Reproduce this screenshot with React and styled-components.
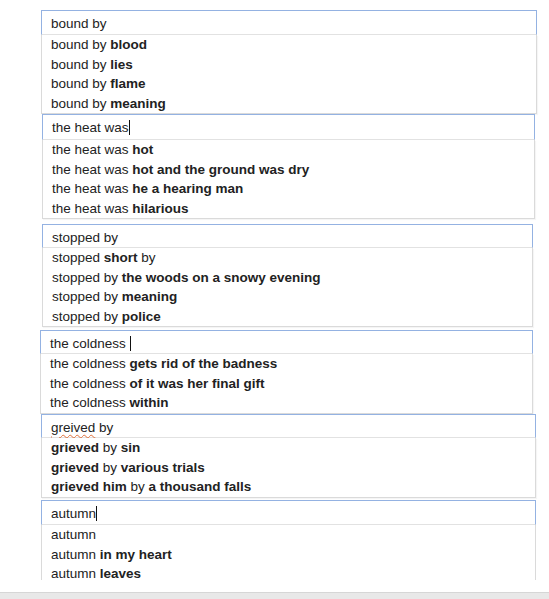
import React from "react";
import styled, { createGlobalStyle } from "styled-components";

const GlobalStyle = createGlobalStyle`
  html, body {
    margin: 0;
    padding: 0;
    background: #ffffff;
  }
  body {
    font-family: "Liberation Sans", Arial, sans-serif;
    color: #222222;
  }
`;

const blocks = [
  {
    query: "bound by",
    left: 41,
    width: 496,
    gap: 10,
    field: 25,
    rows: ["bound by **blood**", "bound by **lies**", "bound by **flame**", "bound by **meaning**"],
  },
  {
    query: "the heat was",
    caret: true,
    left: 42,
    width: 493,
    gap: 0,
    field: 26,
    rows: [
      "the heat was **hot**",
      "the heat was **hot and the ground was dry**",
      "the heat was **he a hearing man**",
      "the heat was **hilarious**",
    ],
  },
  {
    query: "stopped by",
    left: 42,
    width: 491,
    gap: 5,
    field: 24,
    rows: [
      "stopped **short** by",
      "stopped by **the woods on a snowy evening**",
      "stopped by **meaning**",
      "stopped by **police**",
    ],
  },
  {
    query: "the coldness ",
    caret: true,
    left: 40,
    width: 493,
    gap: 3,
    field: 24,
    rows: [
      "the coldness **gets rid of the badness**",
      "the coldness **of it was her final gift**",
      "the coldness **within**",
    ],
  },
  {
    query: " by",
    typo: "greived",
    left: 41,
    width: 495,
    gap: 0.5,
    field: 24,
    rows: ["**grieved** by **sin**", "**grieved** by **various trials**", "**grieved him** by **a thousand falls**"],
  },
  {
    query: "autumn",
    caret: true,
    cut: true,
    left: 41,
    width: 495,
    gap: 2.5,
    field: 25,
    rows: ["autumn", "autumn **in my heart**", "autumn **leaves**"],
  },
];

function renderMarked(text) {
  return text.split("**").map((part, i) =>
    i % 2 === 1 ? <Strong key={i}>{part}</Strong> : <React.Fragment key={i}>{part}</React.Fragment>
  );
}

export default function App() {
  return (
    <>
      <GlobalStyle />
      <Page>
        <Stack>
          {blocks.map((b, i) => (
            <Suggest key={i} $left={b.left} $width={b.width} $gap={b.gap}>
              <Field $h={b.field}>
                {b.typo && <Misspelled>{b.typo}</Misspelled>}
                <Typed>{b.query}</Typed>
                {b.caret && <Caret />}
              </Field>
              <Dropdown $cut={b.cut}>
                {b.rows.map((r, j) => (
                  <Row key={j}>{renderMarked(r)}</Row>
                ))}
              </Dropdown>
            </Suggest>
          ))}
        </Stack>
        <Footer />
      </Page>
    </>
  );
}

const Page = styled.div`
  width: 549px;
  height: 599px;
  display: flex;
  flex-direction: column;
  overflow: hidden;
  background: #ffffff;
`;

const Stack = styled.div`
  flex: 0 0 580px;
  display: flex;
  flex-direction: column;
  overflow: hidden;
`;

const Suggest = styled.div`
  margin-left: ${(p) => p.$left}px;
  margin-top: ${(p) => p.$gap}px;
  width: ${(p) => p.$width}px;
  display: flex;
  flex-direction: column;
  flex-shrink: 0;
  font-size: 13.5px;
`;

const Field = styled.div`
  box-sizing: border-box;
  height: ${(p) => p.$h}px;
  padding: 4px 9px 0;
  line-height: 18px;
  border: 1px solid #94b2e2;
  border-bottom-color: #e2e2e2;
  background: #ffffff;
  white-space: pre;
`;

const Typed = styled.span`
  color: #222222;
`;

const Misspelled = styled.span`
  text-decoration: underline wavy #e0703a;
  text-decoration-thickness: 1px;
  text-underline-offset: 2px;
`;

const Caret = styled.span`
  display: inline-block;
  width: 1px;
  height: 15px;
  vertical-align: -3px;
  background: #111111;
`;

const Dropdown = styled.div`
  border: 1px solid #dadada;
  border-top: none;
  border-bottom: ${(p) => (p.$cut ? "none" : "1px solid #dadada")};
  box-shadow: ${(p) => (p.$cut ? "none" : "1px 1px 1px rgba(0, 0, 0, 0.04)")};
  background: #ffffff;
`;

const Row = styled.div`
  height: 19.5px;
  line-height: 19.5px;
  padding-left: 9px;
  white-space: nowrap;
  color: #222222;
`;

const Strong = styled.b`
  font-weight: bold;
  color: #222222;
`;

const Footer = styled.div`
  margin-top: auto;
  height: 6px;
  background: #e8e8e8;
  border-top: 1px solid #d6d6d6;
`;
